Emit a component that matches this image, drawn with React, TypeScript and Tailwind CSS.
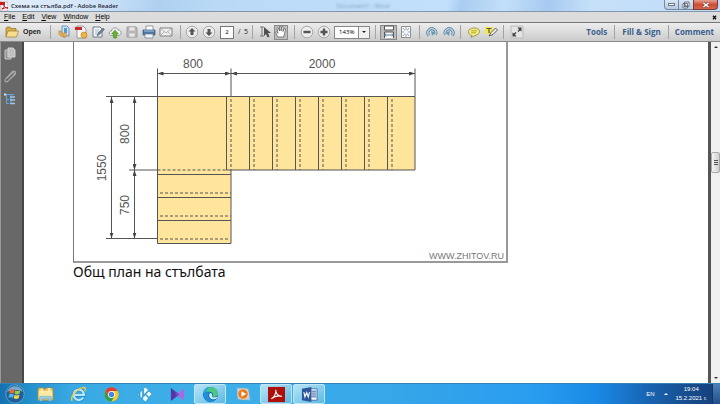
import React, { useState } from 'react';
import { clsx } from 'clsx';

const menus = ['File', 'Edit', 'View', 'Window', 'Help'];

const treads = [226, 249, 272, 295, 318, 341, 364, 387];
const risers = [231, 254, 277, 300, 323, 346, 369, 392];

type IconProps = { children: React.ReactNode; label: string; active?: boolean; className?: string };

const ToolButton: React.FC<IconProps> = ({ children, label, active, className }) => (
  <button
    type="button"
    aria-label={label}
    className={clsx(
      'flex h-[15px] w-[17px] shrink-0 items-center justify-center',
      active && 'border border-[#8b8b8b] bg-[#bcbcbc]',
      className
    )}
  >
    <svg viewBox="0 0 14 14" className="h-[14px] w-[14px] shrink-0" fill="none">
      {children}
    </svg>
  </button>
);

const Separator = () => <span className="h-[14px] w-px shrink-0 bg-[#a3a3a3]" />;

const Round = ({ children }: { children: React.ReactNode }) => (
  <>
    <circle cx="7" cy="7" r="5.8" fill="#ececec" stroke="#999" strokeWidth=".8" />
    {children}
  </>
);

/* Title bar with window buttons */
const TitleBar = () => (
  <header className="flex h-[11px] items-center justify-between bg-[linear-gradient(105deg,#e1edf9_0%,#d3e6f9_12%,#b0d0f1_22%,#b9d9f7_30%,#c2e0fb_62%,#a9ccf1_64%,#c3dffa_70%,#a6caf0_76%,#c6e0f9_82%,#bfdcf8_100%)]">
    <div className="flex min-w-0 items-center gap-[3px]">
      <svg viewBox="0 0 8 10" className="h-[10px] w-2">
        <path d="M1 0h5l2 2v8H1z" fill="#fff" stroke="#a55" strokeWidth=".5" />
        <path d="M0 1h5v3H0z" fill="#c91d22" />
        <path d="M2 8c3-2 2-4 2-4s0 3 4 3c-3-1-5 1-6 1" stroke="#b5121b" fill="none" />
      </svg>
      <h1 className="truncate text-[6px] leading-[10px] font-semibold text-[#1c2733]">Схема на стълба.pdf - Adobe Reader</h1>
    </div>
    <span className="flex-1 pr-14 text-center text-[6px] leading-[10px] text-[#7d9dbd] blur-[1px]">Document1 - Word</span>
    <div className="flex h-[10px] self-start pr-[2px]">
      <button type="button" aria-label="Minimize" className="flex w-[15px] items-center justify-center rounded-bl-sm border border-t-0 border-[#78889c] bg-linear-to-b from-[#d9e7f5] to-[#b4cbe2]">
        <span className="h-[3px] w-[7px] border border-[#6a7685] bg-white" />
      </button>
      <button type="button" aria-label="Restore" className="flex w-[14px] items-center justify-center border-b border-[#78889c] bg-linear-to-b from-[#d9e7f5] to-[#b4cbe2]">
        <svg viewBox="0 0 8 8" className="h-2 w-2" fill="#fff" stroke="#5c6878" strokeWidth=".9">
          <path d="M2.5 1h4.5v4.5H2.5zM1 2.5h4.5V7H1zM2.5 4h1.5v1.5H2.5z" />
        </svg>
      </button>
      <button type="button" aria-label="Close" className="flex w-[25px] items-center justify-center rounded-br-sm border border-t-0 border-[#7d3a35] bg-linear-to-b from-[#e3a093] via-[#cf4b33] to-[#d4664b]">
        <svg viewBox="0 0 8 6" className="h-[6px] w-2">
          <path d="M1.5 1l5 4M6.5 1l-5 4" stroke="#6b4a4a" strokeWidth="2.4" />
          <path d="M1.5 1l5 4M6.5 1l-5 4" stroke="#fff" strokeWidth="1.5" />
        </svg>
      </button>
    </div>
  </header>
);

const MenuBar = () => (
  <nav className="flex h-[11px] items-center gap-[7px] border-t border-[#8297ab] bg-[#dcdcdc] pl-1">
    {menus.map((name) => (
      <button key={name} type="button" className="font-['Liberation_Sans',Arial,sans-serif] text-[7px] leading-[10px] text-black">
        <span className="underline">{name[0]}</span>
        {name.slice(1)}
      </button>
    ))}
    <button type="button" aria-label="Close document" className="ml-auto pr-[3px]">
      <svg viewBox="0 0 5 5" className="h-[5px] w-[5px]">
        <path d="M1 .8l3 3.4M4 .8L1 4.2" stroke="#111" strokeWidth="1.4" />
      </svg>
    </button>
  </nav>
);

const Toolbar = () => {
  const [page, setPage] = useState('2');
  const [zoom, setZoom] = useState('143%');

  return (
    <div className="flex h-[20px] items-center border-t border-b border-t-[#777] border-b-[#8a8a8a] bg-linear-to-b from-[#ededed] to-[#cbcbcb]">
      <button type="button" className="flex shrink-0 items-center gap-1 pl-[5px] font-['Liberation_Sans',Arial,sans-serif] text-[7px] font-bold text-[#222]">
        <svg viewBox="0 0 14 12" className="h-3 w-[14px]">
          <path d="M1 11V2l1-1h3l1 1.500h5V5" fill="#d9ae4a" stroke="#8f712c" strokeWidth=".7" />
          <path d="M1 11L3 5h10.500L11.500 11z" fill="#f7dd8c" stroke="#9c7c33" strokeWidth=".7" />
        </svg>
        Open
      </button>
      <div className="ml-[9px] flex items-center">
        <Separator />
        <div className="flex items-center px-[5px]">
          <ToolButton label="Convert">
            <path d="M5 1h5l2 2v8H5z" fill="#cfe3f7" stroke="#4e7eae" strokeWidth=".8" />
            <path d="M7 3h3v5H7z" fill="#5d97d0" />
            <path d="M2 6c-1 4 2 6 5 5v2l3-3.500L7 7v2C5 9.500 4 8 4 6z" fill="#eeb24b" stroke="#a8731e" strokeWidth=".5" />
          </ToolButton>
          <ToolButton label="Create PDF">
            <path d="M3 1h6l3 3v9H3z" fill="#f6f6f6" stroke="#888" strokeWidth=".8" />
            <path d="M1 2h7v3H1z" fill="#cf2629" />
            <circle cx="10" cy="10" r="3" fill="#efb441" stroke="#b97e1c" strokeWidth=".6" />
          </ToolButton>
          <ToolButton label="Sign">
            <path d="M2 2h7l2 2v8H2z" fill="#f3f6f9" stroke="#6b7c8d" />
            <path d="M4 5h4M4 7h4M4 9h2" stroke="#93a3b3" strokeWidth=".7" />
            <path d="M6 11l1-3 5-5 1.500 1.500-5 5z" fill="#6d8296" stroke="#4b5d6e" strokeWidth=".5" />
          </ToolButton>
          <ToolButton label="Upload">
            <path d="M3.500 10.500C0 10 1 6 3.500 6 4 2 9.500 2 10 5c4 0 4 5 .5 5.500z" fill="#f6f6f6" stroke="#818181" strokeWidth=".8" />
            <path d="M7 5l3.500 4H8.500v4h-3V9h-2z" fill="#65b22e" stroke="#3e7e18" strokeWidth=".5" />
          </ToolButton>
          <ToolButton label="Save">
            <path d="M2 2h9l1 1v9H2z" fill="#bdbdbd" stroke="#9b9b9b" />
            <path d="M4 2h6v4H4zM4 8h6v4H4z" fill="#e8e8e8" stroke="#aaa" strokeWidth=".6" />
          </ToolButton>
          <ToolButton label="Print">
            <path d="M4 1h7v5H4z" fill="#fff" stroke="#777" strokeWidth=".7" />
            <path d="M1 5h12v5H1z" fill="#4e79a5" stroke="#385776" strokeWidth=".7" />
            <path d="M2 6h10" stroke="#a8c7e5" />
            <path d="M3 9h8v4H3z" fill="#eef3f8" stroke="#6d7e90" strokeWidth=".7" />
          </ToolButton>
          <ToolButton label="Email">
            <path d="M1 3h12v8H1z" fill="#f0f0f0" stroke="#777" strokeWidth=".9" />
            <path d="M1 3l6 5 6-5M1 11l4.500-4.500M13 11L8.500 6.500" stroke="#999" strokeWidth=".7" />
          </ToolButton>
        </div>
        <Separator />
        <div className="flex items-center pr-1 pl-[3px]">
          <ToolButton label="Previous page">
            <Round><path d="M7 3l3.500 3.500h-2V10h-3V6.500h-2z" fill="#555" /></Round>
          </ToolButton>
          <ToolButton label="Next page">
            <Round><path d="M7 11l3.500-3.500h-2V4h-3v3.500h-2z" fill="#555" /></Round>
          </ToolButton>
          <input
            aria-label="Page number"
            value={page}
            onChange={(e) => setPage(e.target.value)}
            className="ml-[2px] h-[13px] w-[14px] border border-[#777] bg-white text-center text-[6px] text-black"
          />
          <span className="ml-1 text-[7px] whitespace-pre text-[#222]">/  5</span>
        </div>
        <Separator />
        <div className="flex items-center pr-[6px] pl-1">
          <ToolButton label="Select">
            <path d="M1 2h4M3 2v9M1 11h4" stroke="#777" />
            <path d="M5 2v9l2-2 1.500 3.500 2-1L9 8h3z" fill="#4f4f4f" />
          </ToolButton>
          <ToolButton label="Hand" active className="w-[14px]!">
            <path
              d="M4 12L1.500 7.500c0-1 1-1 1.500-.2L4 8.500 3 3.500c0-1 1.300-1 1.500 0L5.500 6V2c0-1 1.500-1 1.500 0v4l.8-4c.2-1 1.500-.7 1.400.3L9 6.500l1.200-2.700c.5-.9 1.600-.4 1.300.5L10.500 9 9.500 12z"
              fill="#fff"
              stroke="#666"
              strokeWidth=".8"
            />
          </ToolButton>
        </div>
        <Separator />
        <div className="flex items-center pr-[5px] pl-[3px]">
          <ToolButton label="Zoom out">
            <Round><path d="M3.500 5.800h7v2.400h-7z" fill="#555" /></Round>
          </ToolButton>
          <ToolButton label="Zoom in">
            <Round><path d="M3.500 5.800h2.300V3.500h2.400v2.300h2.300v2.400H8.200v2.300H5.800V8.200H3.500z" fill="#555" /></Round>
          </ToolButton>
          <div className="relative ml-[2px]">
            <select
              aria-label="Zoom"
              value={zoom}
              onChange={(e) => setZoom(e.target.value)}
              className="block h-[13px] w-9 appearance-none border border-[#888] bg-white pl-1 text-[6px] leading-[11px] text-black"
            >
              <option>100%</option>
              <option>143%</option>
              <option>200%</option>
            </select>
            <span className="pointer-events-none absolute inset-y-0 right-0 flex w-3 items-center justify-center border border-[#888] bg-[#f1f1f1]">
              <svg viewBox="0 0 4 2" className="h-[2px] w-1"><path d="M0 0h4L2 2z" fill="#222" /></svg>
            </span>
          </div>
        </div>
        <Separator />
        <div className="flex items-center pr-[5px] pl-1">
          <ToolButton label="Fit width" active>
            <path d="M2.500 1h9v4h-9zM2.500 13V7h9v6" fill="#fff" stroke="#555" />
            <path d="M2 10h10M4 8.500L2.500 10 4 11.500M10 8.500l1.500 1.500-1.500 1.500" stroke="#4a6488" strokeWidth=".9" />
          </ToolButton>
          <ToolButton label="Fit page">
            <path d="M2.500 1.500h9v11h-9z" fill="#fff" stroke="#777" strokeWidth=".8" />
            <path d="M4 3l2 2.500M10 3L8 5.500M4 11l2-2.500M10 11L8 8.500M7 2v3M7 12V9M3 7h2.500M11 7H8.500" stroke="#6c86ae" strokeWidth=".8" />
          </ToolButton>
        </div>
        <Separator />
        <div className="flex items-center px-[3px]">
          <ToolButton label="Rotate clockwise">
            <path d="M4 10.500A4 4 0 1 1 10.500 9.500" stroke="#587f99" strokeWidth="3" />
            <path d="M4 10.500A4 4 0 1 1 10.500 9.500" stroke="#b6d2e2" strokeWidth="1.500" />
            <path d="M6 6l4.500 1.500L7 11z" fill="#6d98b2" />
          </ToolButton>
          <ToolButton label="Rotate counterclockwise">
            <path d="M10 10.500A4 4 0 1 0 3.500 9.500" stroke="#587f99" strokeWidth="3" />
            <path d="M10 10.500A4 4 0 1 0 3.500 9.500" stroke="#b6d2e2" strokeWidth="1.500" />
            <path d="M8 6L3.500 7.500 7 11z" fill="#6d98b2" />
          </ToolButton>
        </div>
        <Separator />
        <div className="flex items-center px-1">
          <ToolButton label="Sticky note">
            <path d="M5 10.500C0 9.500 0 3 7 3s7.500 6 1 7.500L4 12.500z" fill="#f8ef79" stroke="#8e8740" strokeWidth=".8" />
            <path d="M4 5.800h6M4 7.800h5" stroke="#99914a" strokeWidth=".8" />
          </ToolButton>
          <ToolButton label="Highlight">
            <path d="M1 2h8v7H1z" fill="#f5e945" />
            <path d="M2.500 3.500h5M5 3.500V8" stroke="#555" strokeWidth="1.2" />
            <path d="M5 11l2-3.500L11.500 3 13.500 5 9 9.500z" fill="#e6e6e6" stroke="#555" strokeWidth=".9" />
          </ToolButton>
        </div>
        <Separator />
        <ToolButton label="Read mode" className="ml-1">
          <path d="M1 1h12v12H1z" fill="#e4e4e4" stroke="#b2b2b2" strokeWidth=".8" />
          <path d="M11.500 2.500v4L10 5.500 8.500 7 7.500 6 9 4.500 7.500 2.500zM2.500 11.500v-4L4 8.500 5.500 7l1 1L5 9.500l1.500 2z" fill="#444" />
        </ToolButton>
      </div>
      <div className="ml-auto flex shrink-0 items-center pr-[6px] text-[8px] font-bold text-[#3a5f8d]">
        <button type="button" className="px-[7px]">Tools</button>
        <Separator />
        <button type="button" className="px-[7px]">Fill &amp; Sign</button>
        <Separator />
        <button type="button" className="pl-[6px]">Comment</button>
      </div>
    </div>
  );
};

const Sidebar = () => (
  <aside className="flex w-6 shrink-0 flex-col items-center gap-[9px] border-r-2 border-l border-r-[#484848] border-l-[#999] bg-[#686868] pt-1 pr-[3px]">
    <button type="button" aria-label="Pages">
      <svg viewBox="0 0 12 14" className="h-[14px] w-3">
        <path d="M1 4h6v9H1z" fill="#999" stroke="#c4c4c4" />
        <path d="M4 2h5l2 2v7H4z" fill="#c0c0c0" stroke="#d2d2d2" />
      </svg>
    </button>
    <button type="button" aria-label="Attachments">
      <svg viewBox="0 0 12 14" className="h-[14px] w-3" fill="none" stroke="#aaa" strokeWidth="1.1">
        <path d="M3 9l5-5c2-1 3 .5 2 2l-6 6c-2 2-4 0-2.500-2L8 3c2-2 5 0 3 2.500L6 10" />
      </svg>
    </button>
    <button type="button" aria-label="Model tree">
      <svg viewBox="0 0 12 14" className="h-[14px] w-3" fill="none">
        <path d="M1 2.500h9M2.500 3v8.500M2.500 7.500H5M2.500 11.500H5M7 3v9" stroke="#63a6df" strokeWidth="1.1" />
        <path d="M6 5h5M6 8h5M6 11.500h5" stroke="#9bc7ec" strokeWidth="1.3" />
        <path d="M0 1.500h2v2H0z" fill="#ddd" />
      </svg>
    </button>
  </aside>
);

/* Plan drawing, millimetre dimensions on the outside */
const StairPlan = () => (
  <svg viewBox="74 42 432 219" className="block w-full" fontFamily="'Liberation Sans', Arial, sans-serif" fontSize="12" fill="#555">
    <defs>
      <marker id="arrow" viewBox="0 0 6 4" refX="6" refY="2" markerWidth="6" markerHeight="4" markerUnits="userSpaceOnUse" orient="auto-start-reverse">
        <path d="M0 0l6 2-6 2z" fill="#444" />
      </marker>
    </defs>
    <path d="M157.500 96.500H231V243.500H157.500zM226.500 96.500H415V170H226.500z" fill="#ffe49b" />
    <g fill="none" stroke="#555" strokeWidth="1">
      <path d="M106 96.500H415V170H231V243.500H157.500V68.500M231 68.500V96.500M415 68.500V96.500M106 238.500H157.500M129 170H157.500" />
      <path d="M157.500 174.500H231M157.500 197.500H231M157.500 220.500H231M226 170H231" />
      {treads.map((x) => (
        <path key={x} d={`M${x + 0.5} 96.500V170`} />
      ))}
      <g strokeDasharray="3 2">
        {risers.map((x) => (
          <path key={x} d={`M${x} 99V170`} />
        ))}
        <path d="M157.500 170H226M160 193H231M160 216H231M160 239H229" />
      </g>
      <g markerStart="url(#arrow)" markerEnd="url(#arrow)">
        <path d="M157.500 73.500H231" />
        <path d="M231 73.500H415" />
        <path d="M111.500 97V238.500" />
        <path d="M134.500 97V170" />
        <path d="M134.500 170V238.500" />
      </g>
    </g>
    <g textAnchor="middle">
      <text x="193" y="68">800</text>
      <text x="322" y="68">2000</text>
      <text transform="translate(129 134) rotate(-90)">800</text>
      <text transform="translate(129 205) rotate(-90)">750</text>
      <text transform="translate(106 168) rotate(-90)">1550</text>
    </g>
    <text x="504" y="259" textAnchor="end" fontSize="9" fill="#777">WWW.ZHITOV.RU</text>
  </svg>
);

const DocumentView = () => (
  <main className="flex min-h-0 flex-1">
    <Sidebar />
    <section className="min-w-0 flex-1 bg-white pl-[49px]">
      <figure className="max-w-[435px]">
        <div className="border-r-2 border-b-2 border-l border-[#999] border-l-[#777]">
          <StairPlan />
        </div>
        <figcaption className="font-['Noto_Sans','Open_Sans',sans-serif] text-[14px] leading-[18px] text-[#111]">Общ план на стълбата</figcaption>
      </figure>
    </section>
    <div className="flex w-3 shrink-0 flex-col items-center justify-between border-l-3 border-[#555] bg-[#f0f0f0] py-1">
      <svg viewBox="0 0 4 2" className="h-[2px] w-1"><path d="M0 2h4L2 0z" fill="#333" /></svg>
      <div className="mt-[104px] mb-auto flex h-[21px] w-[9px] flex-col items-center justify-center gap-px rounded-xs border border-[#aaa] bg-linear-to-r from-[#f4f4f4] to-[#cfcfcf]">
        <span className="h-px w-1 bg-[#555]" />
        <span className="h-px w-1 bg-[#555]" />
        <span className="h-px w-1 bg-[#555]" />
      </div>
      <svg viewBox="0 0 4 2" className="h-[2px] w-1"><path d="M0 0h4L2 2z" fill="#333" /></svg>
    </div>
  </main>
);

const apps = [
  {
    name: 'Explorer',
    icon: (
      <>
        <path d="M1 4l1-2h5l1 2 2-2h6l1 2v11H1z" fill="#e8c35f" stroke="#b98d2a" strokeWidth=".6" />
        <path d="M2 5h14v8H2z" fill="#fae8a4" />
        <path d="M4 3h2v4H4zM12 2h2v4h-2z" fill="#fff3c4" />
        <path d="M3 16v-5h12v5h-2.500v-2.500h-7V16z" fill="#9bd2ee" stroke="#5c9fc4" strokeWidth=".6" />
      </>
    ),
  },
  {
    name: 'Internet Explorer',
    icon: (
      <>
        <path d="M14 12.200A5.500 5.500 0 1 1 14.800 9.500H5" fill="none" stroke="#1f86c6" strokeWidth="3.600" />
        <path d="M14 12.200A5.500 5.500 0 1 1 14.800 9.500H5" fill="none" stroke="#b4e8fd" strokeWidth="2.400" />
        <path d="M2.500 15.500C-1 13 7 2.500 14.500 1.500c2.500 0 2 2 1 4" fill="none" stroke="#f4c844" strokeWidth="1.500" />
      </>
    ),
  },
  {
    name: 'Chrome',
    icon: (
      <>
        <circle cx="9" cy="9" r="7.500" fill="#f8c928" />
        <path d="M2.500 5.200A7.500 7.500 0 0 1 15.500 5.200H9L6 10.800z" fill="#dd4033" />
        <path d="M2.500 5.200L5.700 10.800 12 11 9 16.500A7.500 7.500 0 0 1 2.500 5.200z" fill="#2f9e4e" />
        <circle cx="9" cy="9" r="3.600" fill="#fff" />
        <circle cx="9" cy="9" r="2.800" fill="#4383ea" />
      </>
    ),
  },
  {
    name: 'Kodi',
    icon: (
      <g fill="#eefaff" stroke="#1684bd" strokeWidth=".6">
        <path d="M10 1l3.300 3.300L8 9.600V3zM13.700 5.300L17 8.600l-3.300 3.300-3.300-3.300zM10 9.300l3.300 3.700L10 17l-3.700-3.700zM6.800 4.200v9.300L4.300 11V6.700zM3.500 7.500v2.800L1.500 9z" />
      </g>
    ),
  },
  {
    name: 'KMPlayer',
    icon: (
      <>
        <path d="M2 2l9 7-9 7z" fill="#5236a8" />
        <path d="M16 3v12L7 9z" fill="#a46ce0" />
        <path d="M7 6l4 3-4 3z" fill="#7046c8" />
      </>
    ),
  },
  {
    name: 'Edge',
    open: true,
    icon: (
      <>
        <circle cx="9" cy="9" r="8" fill="#1768b5" />
        <path d="M1.200 8C2 3 5 1 9 1c5 0 8 3.500 8 7 0 3-3 4-6 3 2-2 0-5-3-5S3 7 1.200 8z" fill="#4cc884" />
        <path d="M1.200 8C2 3 5 1 9 1c-4 2-5 5-2 5-3 0-4 1-5.800 2z" fill="#29a8d8" />
        <path d="M8 7c-3 3-1 8 5 8-6 4-12-1-11.500-6C3 6.500 6 6 8 7z" fill="#1e8fd8" />
        <path d="M8.500 7.500c2 0 3 2 2 3.500 2 1.500 5 .8 6 0-1 4-7 4-8.500 1-.8-1.500-.5-3 .5-4.500z" fill="#c4ebfa" />
      </>
    ),
  },
  {
    name: 'Media Player',
    icon: (
      <>
        <path d="M2 2l12 1 2 12-13-1z" fill="#b9d3e6" stroke="#8eb1c9" strokeWidth=".6" />
        <circle cx="8.500" cy="8.500" r="5.500" fill="#ee7b20" stroke="#f8e3cf" strokeWidth=".7" />
        <path d="M6.800 5.500l5 3-5 3z" fill="#fff" />
      </>
    ),
  },
  {
    name: 'Adobe Reader',
    open: true,
    icon: (
      <>
        <path d="M0 1h18v16H0z" fill="#ae0f0b" />
        <path d="M3.500 13.500c3-1.500 5.500-6 4.700-9.500 0 4 3 6.500 6.500 7-3-1-8 0-11.200 2.500z" fill="none" stroke="#fff" strokeWidth="1.100" />
      </>
    ),
  },
  {
    name: 'Word',
    open: true,
    icon: (
      <>
        <path d="M9 3h8v12H9z" fill="#fff" stroke="#2b579a" strokeWidth=".8" />
        <path d="M11 5.500h5M11 7.500h5M11 9.500h5M11 11.500h5" stroke="#2b579a" />
        <path d="M1 3l10-2v16L1 15z" fill="#2b579a" />
        <path d="M3 6.500l1.200 5L6 7l1.700 4.500 1.300-5" fill="none" stroke="#fff" strokeWidth="1.200" />
      </>
    ),
  },
];

const Taskbar = () => (
  <footer className="flex h-[21px] shrink-0 items-stretch border-t border-[#3982b5] bg-[linear-gradient(90deg,#1570b0_0%,#238fca_4%,#39a9e4_10%,#3eb0e8_30%,#36a6e9_55%,#289cef_75%,#1989e5_83%,#1864b2_90%,#174b8a_96%,#153f7b_100%)]">
    <button type="button" aria-label="Start" className="flex w-[29px] items-center justify-center">
      <svg viewBox="0 0 20 20" className="h-5 w-5">
        <circle cx="10" cy="10" r="9.200" fill="#1d5d98" stroke="#78b6db" strokeWidth=".7" />
        <path d="M2 8a8.500 8.500 0 0 1 16 0c-5-3-11-3-16 0" fill="#7ba9cb" />
        <path d="M5 6q2.500-1.500 4.500 0L9 9.500Q6.500 8.300 4.200 9.500z" fill="#ee6938" />
        <path d="M10.300 6.300q2.500 1.300 5-.3l-.8 3.800q-2.500 1.200-4.800 0z" fill="#98ce3e" />
        <path d="M4 10.500q2.500-1.300 4.800 0L8 14q-2.500-1.300-4.500 0z" fill="#4bb3ed" />
        <path d="M9.500 10.800q2.500 1.200 5 0l-.9 3.500q-2.500 1.300-4.800 0z" fill="#fad345" />
      </svg>
    </button>
    <div className="flex gap-px">
      {apps.map((app) => (
        <button
          key={app.name}
          type="button"
          aria-label={app.name}
          className={clsx(
            'flex w-8 items-center justify-center',
            app.open && 'rounded-xs border border-[#bde6f7] bg-linear-to-br from-[#b5e4f6] to-[#5bb9e4]'
          )}
        >
          <svg viewBox="0 0 18 18" className="h-[17px] w-[17px] shrink-0">{app.icon}</svg>
        </button>
      ))}
    </div>
    <div className="ml-auto flex items-center font-['Liberation_Sans',Arial,sans-serif] text-[6px] text-white">
      <span>EN</span>
      <svg viewBox="0 0 4 2" className="mr-2 ml-[9px] h-[2px] w-1"><path d="M0 2h4L2 0z" fill="#fff" /></svg>
      <div className="text-center leading-[9px]">
        <p>19:04</p>
        <p>15.2.2021 г.</p>
      </div>
      <button type="button" aria-label="Show desktop" className="ml-[5px] h-full w-2 border-l border-[#123660] bg-linear-to-b from-[#4f80b5] to-[#1e4f8c]" />
    </div>
  </footer>
);

const App: React.FC = () => (
  <div className="flex h-screen flex-col overflow-hidden bg-white font-['Open_Sans','Noto_Sans',sans-serif]">
    <TitleBar />
    <MenuBar />
    <Toolbar />
    <DocumentView />
    <Taskbar />
  </div>
);

export default App;
